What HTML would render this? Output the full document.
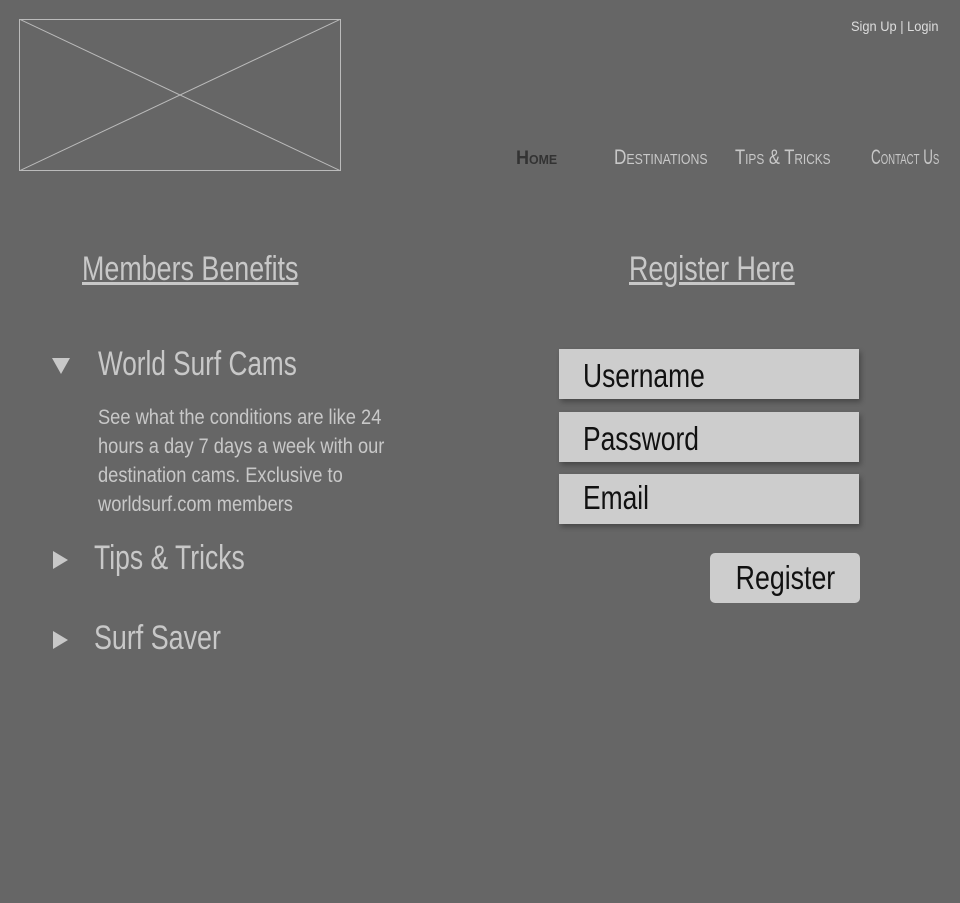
<!DOCTYPE html>
<html><head><meta charset="utf-8"><style>
body{margin:0;width:960px;height:903px;background:#666;position:relative;overflow:hidden;font-family:"Liberation Sans",sans-serif;color:#c8c8c8}
.a{position:absolute;white-space:nowrap;transform-origin:0 0}
.nav{font-variant:small-caps;font-size:21px;top:146px;transform:scaleX(.82)}
.in{position:absolute;left:559px;width:300px;height:50px;background:#cdcdcd;box-shadow:2px 3px 5px rgba(0,0,0,.3);color:#111;font-size:33px;line-height:50px}
.in span{position:absolute;left:24px;transform:scaleX(.8);transform-origin:0 0}
.tri{position:absolute;width:0;height:0}
.h{font-size:34px;transform:scaleX(.78)}
</style></head><body>
<svg class="a" style="left:19px;top:19px" width="322" height="152"><rect x="0.5" y="0.5" width="321" height="151" fill="none" stroke="#bbb"/><line x1="0" y1="0" x2="322" y2="152" stroke="#bbb"/><line x1="322" y1="0" x2="0" y2="152" stroke="#bbb"/></svg>
<div class="a" style="left:851px;top:19px;font-size:13.5px;color:#ddd;transform:scaleX(.95)">Sign Up | Login</div>
<div class="a nav" style="left:516px;color:#333;font-weight:bold;font-size:19px;top:148px;transform:scaleX(.95)">Home</div>
<div class="a nav" style="left:614px">Destinations</div>
<div class="a nav" style="left:735px;transform:scaleX(.79)">Tips &amp; Tricks</div>
<div class="a nav" style="left:871px;transform:scaleX(.64)">Contact Us</div>
<div class="a h" style="left:82px;top:250px;text-decoration:underline;transform:scaleX(.79)">Members Benefits</div>
<div class="a h" style="left:629px;top:250px;text-decoration:underline;transform:scaleX(.79)">Register Here</div>
<div class="tri" style="left:52px;top:358px;border-left:9px solid transparent;border-right:9px solid transparent;border-top:16px solid #c8c8c8"></div>
<div class="a h" style="left:98px;top:345px;transform:scaleX(.77)">World Surf Cams</div>
<div class="a" style="left:98px;top:403px;font-size:21px;line-height:29px;transform:scaleX(.87)">See what the conditions are like 24<br>hours a day 7 days a week with our<br>destination cams. Exclusive to<br>worldsurf.com members</div>
<div class="tri" style="left:53px;top:551px;border-top:9px solid transparent;border-bottom:9px solid transparent;border-left:15px solid #c8c8c8"></div>
<div class="a h" style="left:94px;top:539px">Tips &amp; Tricks</div>
<div class="tri" style="left:53px;top:631px;border-top:9px solid transparent;border-bottom:9px solid transparent;border-left:15px solid #c8c8c8"></div>
<div class="a h" style="left:94px;top:619px;transform:scaleX(.79)">Surf Saver</div>
<div class="in" style="top:349px"><span style="top:2px">Username</span></div>
<div class="in" style="top:412px"><span style="top:2px">Password</span></div>
<div class="in" style="top:474px"><span style="top:-1px">Email</span></div>
<div class="a" style="left:710px;top:553px;width:150px;height:50px;background:#cdcdcd;border-radius:5px;color:#111;font-size:33px;line-height:50px;text-align:center"><span style="display:inline-block;transform:scaleX(.81)">Register</span></div>
</body></html>
